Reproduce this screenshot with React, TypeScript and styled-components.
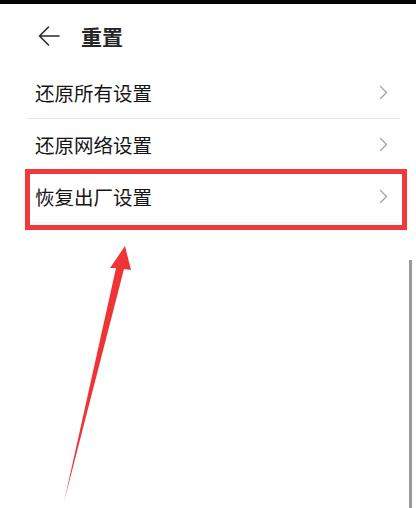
import React from 'react';
import styled, { createGlobalStyle } from 'styled-components';

const GlobalStyle = createGlobalStyle`
    html, body {
        margin: 0;
        padding: 0;
        background: #ffffff;
    }
    body {
        font-family: "Noto Sans CJK SC", "Noto Sans", sans-serif;
        color: #1c1c1c;
    }
`;

const Screen = styled.div`
    position: relative;
    width: 416px;
    height: 508px;
    overflow: hidden;
    background: #ffffff;
`;

const StatusStrip = styled.div`
    height: 4px;
    background: #050505;
`;

const Header = styled.div`
    display: flex;
    align-items: center;
    gap: 20px;
    height: 63px;
    padding-left: 37px;
`;

const BackButton = styled.div`
    display: flex;
    align-items: center;
    width: 24px;
    height: 24px;
    color: #2a2a2a;
`;

const Title = styled.div`
    font-size: 21px;
    font-weight: 700;
    line-height: 1;
    color: #262626;
    padding-top: 1px;
`;

const List = styled.div`
    display: flex;
    flex-direction: column;
    margin: 0 16px 0 27px;
`;

const Row = styled.div<{ $last?: boolean }>`
    display: flex;
    align-items: center;
    justify-content: space-between;
    height: 51px;
    padding: 0 12px 0 8px;
    border-bottom: 1px solid ${(p) => (p.$last ? '#f4f4f4' : '#e8e8e8')};
`;

const Label = styled.span`
    font-size: 19.5px;
    line-height: 1;
    color: #151515;
`;

const Chevron = styled.svg`
    width: 9px;
    height: 15px;
    color: #a6a6a6;
`;

const Highlight = styled.div`
    position: absolute;
    left: 25px;
    top: 169px;
    width: 382px;
    height: 61px;
    box-sizing: border-box;
    border: 5px solid #ee3a3c;
    pointer-events: none;
`;

const Pointer = styled.svg`
    position: absolute;
    left: 0;
    top: 0;
    width: 416px;
    height: 508px;
    pointer-events: none;
`;

const ScrollThumb = styled.div`
    position: absolute;
    left: 409px;
    top: 260px;
    bottom: 0;
    width: 3px;
    background: #9a9a9a;
`;

const items = ['还原所有设置', '还原网络设置', '恢复出厂设置'];

const App: React.FC = () => {
    return (
        <Screen>
            <GlobalStyle />
            <StatusStrip />
            <Header>
                <BackButton>
                    <svg width="24" height="24" viewBox="0 0 24 24" fill="none">
                        <path d="M22 12H2.5M11.5 3 2.5 12l9 9" stroke="currentColor" strokeWidth="1.6" strokeLinecap="round" strokeLinejoin="round" />
                    </svg>
                </BackButton>
                <Title>重置</Title>
            </Header>
            <List>
                {items.map((text, i) => (
                    <Row key={text} $last={i === items.length - 1}>
                        <Label>{text}</Label>
                        <Chevron viewBox="0 0 9 15" fill="none">
                            <path d="M1.5 1.5 7.5 7.5l-6 6" stroke="currentColor" strokeWidth="1.4" strokeLinecap="round" strokeLinejoin="round" />
                        </Chevron>
                    </Row>
                ))}
            </List>
            <Highlight />
            <Pointer viewBox="0 0 416 508">
                <path d="M64 502 L116 268 L110 268 L125 246 L131 270 L124 269 Z" fill="#f03435" />
            </Pointer>
            <ScrollThumb />
        </Screen>
    );
};

export default App;
